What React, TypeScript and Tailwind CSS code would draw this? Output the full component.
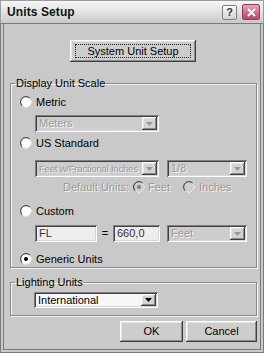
import React from "react";

const SUNKEN =
  "shadow-[inset_1px_1px_0_#808080,inset_-1px_-1px_0_#ffffff,inset_2px_2px_0_#404040,inset_-2px_-2px_0_#d6d6d6]";
const RAISED =
  "shadow-[inset_-1px_-1px_0_#404040,inset_1px_1px_0_#ffffff,inset_-2px_-2px_0_#8a8a8a,inset_2px_2px_0_#e4e4e4]";
const DIS = "text-[#9a9a9a] [text-shadow:1px_1px_0_#f4f4f4]";

function Radio({ checked = false, disabled = false }: { checked?: boolean; disabled?: boolean }) {
  return (
    <svg width="12" height="12" viewBox="0 0 12 12" className="shrink-0">
      <circle cx="6" cy="6" r="5.5" fill={disabled ? "#cfcfcf" : "#ffffff"} stroke="#8a8a8a" />
      <path d="M2.2 9.8 A5.2 5.2 0 0 1 9.8 2.2" fill="none" stroke="#4a4a4a" strokeWidth="1" />
      <path d="M9.8 2.2 A5.2 5.2 0 0 1 2.2 9.8" fill="none" stroke="#ffffff" strokeWidth="1" />
      {checked && <circle cx="6" cy="6" r="2" fill={disabled ? "#808080" : "#000000"} />}
    </svg>
  );
}

function Arrow({ disabled = false }: { disabled?: boolean }) {
  return (
    <div className={`w-[15px] self-stretch my-[2px] mr-[2px] flex items-center justify-center bg-[#d4d4d4] ${RAISED}`}>
      <svg width="7" height="4" viewBox="0 0 7 4">
        <path d="M0 0 H7 L3.5 4 Z" fill={disabled ? "#9a9a9a" : "#000000"} />
      </svg>
    </div>
  );
}

function Combo({
  w,
  h = "h-[17px]",
  text,
  disabled = false,
  textClass = "",
}: {
  w: string;
  h?: string;
  text: string;
  disabled?: boolean;
  textClass?: string;
}) {
  return (
    <div className={`${w} ${h} shrink-0 flex items-stretch ${disabled ? "bg-[#cdcdcd]" : "bg-[#f7f7f7]"} ${SUNKEN}`}>
      <div
        className={`flex-1 flex items-center pl-[4px] whitespace-nowrap leading-none ${textClass} ${disabled ? DIS : "text-black"}`}
      >
        {text}
      </div>
      <Arrow disabled={disabled} />
    </div>
  );
}

function Field({ w, text }: { w: string; text: string }) {
  return (
    <div className={`${w} h-[17px] shrink-0 flex items-center pl-[4px] bg-[#ededed] ${SUNKEN} leading-none text-[#333]`}>
      {text}
    </div>
  );
}

function RadioRow({
  label,
  checked = false,
  className = "",
}: {
  label: string;
  checked?: boolean;
  className?: string;
}) {
  return (
    <div className={`h-[14px] flex items-center gap-[4px] ml-[9px] ${className}`}>
      <Radio checked={checked} />
      <span className="leading-none">{label}</span>
    </div>
  );
}

export default function App() {
  return (
    <div className="w-[264px] h-[353px] flex flex-col bg-[#c9c9c9] font-['Liberation_Sans',Arial,sans-serif] text-[11px] text-black select-none overflow-hidden">
      {/* title bar */}
      <div className="h-[24px] shrink-0 flex items-center pl-[6px] pr-[3px] bg-gradient-to-b from-[#f6f6f6] via-[#e3e3e3] to-[#c8c8c8] border-t border-x border-[#9c9c9c] border-b border-b-[#7a7a7a]">
        <span className="text-[12px] font-bold text-[#141414] tracking-[0.1px]">Units Setup</span>
        <div className="ml-auto flex items-center gap-[5px]">
          <div className="w-[15px] h-[15px] flex items-center justify-center bg-gradient-to-b from-[#fbfbfb] to-[#d2d2d2] border border-[#7e7e7e] rounded-[2px] text-[11px] font-bold text-[#333] leading-none">
            ?
          </div>
          <div className="w-[18px] h-[16px] flex items-center justify-center bg-gradient-to-b from-[#eaa6b8] via-[#d0708c] to-[#b9486a] border border-[#8e4058] rounded-[2px]">
            <svg width="9" height="9" viewBox="0 0 9 9">
              <path d="M1 1 L8 8 M8 1 L1 8" stroke="#ffffff" strokeWidth="1.8" />
            </svg>
          </div>
        </div>
      </div>

      {/* body */}
      <div className="flex-1 flex flex-col border-x-[4px] border-b-[4px] border-double border-[#7a7a7a]">
        <div
          className={`mt-[16px] ml-[66px] w-[126px] h-[22px] shrink-0 flex items-center justify-center bg-[#cdcdcd] ${RAISED}`}
        >
          <div className="w-[116px] h-[14px] flex items-center justify-center border border-dotted border-[#222] leading-none">
            System Unit Setup
          </div>
        </div>

        {/* Display Unit Scale */}
        <fieldset className="mt-[15px] ml-[6px] mr-[3px] h-[191px] border border-[#8a8a8a] shadow-[1px_1px_0_#f2f2f2,inset_1px_1px_0_#f2f2f2]">
          <legend className="ml-[4px] px-[1px] leading-[13px]">Display Unit Scale</legend>
          <div className="flex flex-col">
            <RadioRow label="Metric" className="mt-[5px]" />
            <div className="mt-[6px] ml-[24px]">
              <Combo w="w-[124px]" text="Meters" disabled />
            </div>
            <RadioRow label="US Standard" className="mt-[4px]" />
            <div className="mt-[10px] ml-[24px] flex gap-[8px]">
              <Combo
                w="w-[124px]"
                text="Feet w/Fractional Inches"
                disabled
                textClass="text-[9.5px] tracking-[-0.2px]"
              />
              <Combo w="w-[80px]" text="1/8" disabled />
            </div>
            <div className={`mt-[3px] h-[14px] ml-[52px] flex items-center leading-none ${DIS}`}>
              <span>Default Units:</span>
              <span className="ml-[4px]">
                <Radio checked disabled />
              </span>
              <span className="ml-[3px]">Feet</span>
              <span className="ml-[13px]">
                <Radio disabled />
              </span>
              <span className="ml-[4px]">Inches</span>
            </div>
            <RadioRow label="Custom" className="mt-[10px]" />
            <div className="mt-[7px] ml-[24px] flex items-center">
              <Field w="w-[62px]" text="FL" />
              <span className="w-[16px] text-center leading-none">=</span>
              <Field w="w-[47px]" text="660,0" />
              <div className="ml-[7px]">
                <Combo w="w-[80px]" text="Feet" disabled />
              </div>
            </div>
            <RadioRow label="Generic Units" checked className="mt-[10px]" />
          </div>
        </fieldset>

        {/* Lighting Units */}
        <fieldset className="mt-[8px] ml-[6px] mr-[3px] h-[40px] border border-[#8a8a8a] shadow-[1px_1px_0_#f2f2f2,inset_1px_1px_0_#f2f2f2]">
          <legend className="ml-[4px] px-[1px] leading-[13px]">Lighting Units</legend>
          <div className="mt-[3px] ml-[23px]">
            <Combo w="w-[124px]" h="h-[16px]" text="International" />
          </div>
        </fieldset>

        <div className="mt-[5px] mr-[3px] flex justify-end gap-[3px]">
          <div className={`w-[63px] h-[21px] flex items-center justify-center bg-[#cdcdcd] ${RAISED} leading-none`}>
            OK
          </div>
          <div className={`w-[71px] h-[21px] flex items-center justify-center bg-[#cdcdcd] ${RAISED} leading-none`}>
            Cancel
          </div>
        </div>
      </div>
    </div>
  );
}
